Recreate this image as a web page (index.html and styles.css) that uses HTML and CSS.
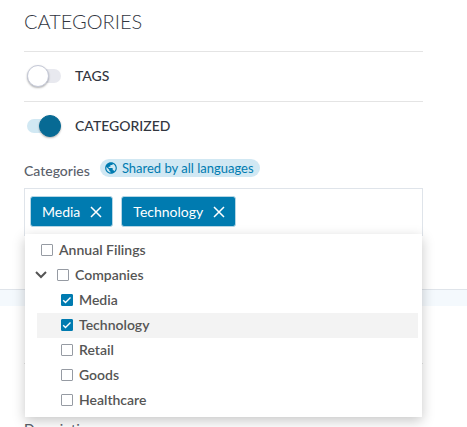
FILE: index.html
```html
<!DOCTYPE html>
<html lang="en">

<head>
    <meta charset="UTF-8">
    <meta name="viewport" content="width=device-width, initial-scale=1.0">
    <title>Categories</title>
    <link rel="stylesheet" href="styles.css">
</head>

<body>
    <section class="panel">
        <h2>CATEGORIES</h2>
        <div class="option">
            <input type="checkbox" class="switch" id="tags">
            <label for="tags">TAGS</label>
        </div>
        <div class="option">
            <input type="checkbox" class="switch" id="categorized" checked>
            <label for="categorized">CATEGORIZED</label>
        </div>

        <div class="field-head">
            <span class="field-label">Categories</span>
            <span class="shared">
                <svg width="14" height="14" viewBox="0 0 24 24"><path fill="currentColor" d="M12 2C6.48 2 2 6.48 2 12s4.48 10 10 10 10-4.48 10-10S17.52 2 12 2zm-1 17.93c-3.95-.49-7-3.85-7-7.93 0-.62.08-1.21.21-1.79L9 15v1c0 1.1.9 2 2 2v1.93zm6.9-2.54c-.26-.81-1-1.39-1.9-1.39h-1v-3c0-.55-.45-1-1-1H8v-2h2c.55 0 1-.45 1-1V7h2c1.1 0 2-.9 2-2v-.41c2.93 1.19 5 4.06 5 7.41 0 2.08-.8 3.97-2.1 5.39z"/></svg>
                Shared by all languages
            </span>
        </div>

        <div class="select">
            <div class="chips">
                <button type="button" class="chip">Media
                    <svg width="12" height="12" viewBox="0 0 12 12"><path d="M1 1l10 10M11 1L1 11"/></svg>
                </button>
                <button type="button" class="chip">Technology
                    <svg width="12" height="12" viewBox="0 0 12 12"><path d="M1 1l10 10M11 1L1 11"/></svg>
                </button>
            </div>
            <ul class="tree">
                <li><label><input type="checkbox"> Annual Filings</label></li>
                <li class="parent">
                    <button type="button" class="toggle" aria-label="Collapse">
                        <svg width="12" height="8" viewBox="0 0 12 8"><path d="M1 1l5 5 5-5"/></svg>
                    </button>
                    <label><input type="checkbox"> Companies</label>
                </li>
                <li class="child"><label><input type="checkbox" checked> Media</label></li>
                <li class="child active"><label><input type="checkbox" checked> Technology</label></li>
                <li class="child"><label><input type="checkbox"> Retail</label></li>
                <li class="child"><label><input type="checkbox"> Goods</label></li>
                <li class="child"><label><input type="checkbox"> Healthcare</label></li>
            </ul>
        </div>
    </section>

    <div class="divider"></div>

    <section class="panel next">
        <div class="next-head"></div>
        <span class="field-label">Description</span>
    </section>
</body>

</html>
```

FILE: styles.css
```css
* {
    box-sizing: border-box;
}

body {
    height: 100vh;
    margin: 0;
    overflow: hidden;
    background: #fff;
    color: #32363f;
    font-family: Lato, "Liberation Sans", sans-serif;
    font-size: 14px;
}

.panel {
    padding: 0 44px 0 24px;
}

h2 {
    margin: 0;
    padding: 7px 0 16px;
    font-size: 20px;
    font-weight: 300;
    line-height: 28px;
}

.option {
    display: flex;
    align-items: center;
    gap: 14px;
    height: 50px;
    padding: 0 0 2px 3px;
    border-top: 1px solid #e4e4e4;
    font-weight: 500;
}

.switch {
    display: flex;
    align-items: center;
    appearance: none;
    width: 34px;
    height: 14px;
    margin: 0;
    padding: 0;
    border: 0;
    border-radius: 7px;
    background: #e8e9ef;
}

.switch::before {
    content: "";
    flex: none;
    width: 20px;
    height: 20px;
    border: 1px solid #c5c9d8;
    border-radius: 50%;
    background: #fff;
    box-shadow: 0 1px 2px rgba(0, 0, 0, 0.3);
}

.switch:checked {
    justify-content: flex-end;
    background: #d1e8f3;
}

.switch:checked::before {
    border-color: #076a94;
    background: #076a94;
}

.field-head {
    display: flex;
    align-items: flex-start;
    gap: 10px;
    height: 37px;
    padding-top: 8px;
}

.field-label {
    color: #5a616b;
    font-weight: 500;
    line-height: 24px;
}

.shared {
    display: flex;
    align-items: center;
    gap: 4px;
    padding: 0 6px 0 4px;
    border-radius: 9px;
    background: #d1e8f3;
    color: #007bb0;
    font-size: 13px;
    line-height: 18px;
}

.select {
    position: relative;
    border: 1px solid #dfe4ea;
}

.chips {
    display: flex;
    gap: 8px;
    padding: 7px 5px 8px;
}

.chip {
    display: flex;
    align-items: center;
    gap: 10px;
    height: 31px;
    padding: 0 10px 0 11px;
    border: 1px solid #b5d6e5;
    border-radius: 3px;
    background: #007bb0;
    color: #fff;
    font: inherit;
}

.chip svg,
.toggle svg {
    fill: none;
    stroke: currentColor;
    stroke-width: 2;
}

.chip svg {
    stroke-width: 1.5;
}

.tree {
    position: absolute;
    top: 45px;
    left: 0;
    right: 0;
    margin: 0;
    padding: 4px 4px 4px 12px;
    list-style: none;
    background: #fff;
    box-shadow: 0 4px 12px rgba(0, 0, 0, 0.22);
    color: #555;
    font-weight: 600;
}

.tree li {
    display: flex;
    align-items: center;
    height: 25px;
    padding: 0 0 2px 4px;
}

.tree label {
    display: flex;
    align-items: center;
    gap: 6px;
}

.tree .parent {
    gap: 10px;
    padding-left: 0;
}

.tree .child {
    padding-left: 24px;
}

.tree .active {
    background: #f3f3f3;
}

.toggle {
    display: flex;
    margin: 0 0 0 -2px;
    padding: 0;
    border: 0;
    background: none;
    color: #555;
}

.tree input {
    appearance: none;
    width: 12px;
    height: 12px;
    margin: 0;
    border: 1px solid #969ba3;
    border-radius: 1px;
}

.tree input:checked {
    border-color: #007bb0;
    background: #007bb0 url("data:image/svg+xml,%3Csvg xmlns='http://www.w3.org/2000/svg' viewBox='0 0 10 10'%3E%3Cpath d='M1.2 5.2l2.3 2.3 5-5' fill='none' stroke='white' stroke-width='1.4'/%3E%3C/svg%3E") center / 10px 10px no-repeat;
}

.divider {
    height: 17px;
    margin-top: 53px;
    border-top: 1px solid #dfe4ea;
    background: #f4f9fd;
}

.next-head {
    height: 58px;
    margin-bottom: 53px;
    border-bottom: 1px solid #e4e4e4;
}
```
